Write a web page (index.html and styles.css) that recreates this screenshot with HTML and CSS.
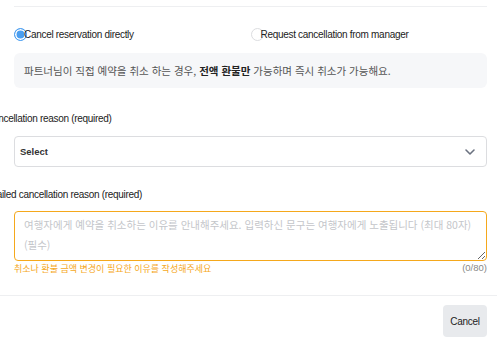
FILE: index.html
```html
<!DOCTYPE html>
<html lang="ko">

<head>
    <meta charset="UTF-8">
    <title>Cancel reservation</title>
    <link rel="stylesheet" href="styles.css">
</head>

<body>
    <div class="cancel-form">
        <div class="cancel-body">
            <div class="radio-row">
                <label class="radio">
                    <span class="radio-dot checked"></span>
                    <span class="radio-text">Cancel reservation directly</span>
                </label>
                <label class="radio">
                    <span class="radio-dot"></span>
                    <span class="radio-text">Request cancellation from manager</span>
                </label>
            </div>
            <div class="notice">
                파트너님이 직접 예약을 취소 하는 경우,&nbsp;<b>전액 환불만</b>&nbsp;가능하며 즉시 취소가 가능해요.
            </div>
            <p class="field-label">Cancellation reason (required)</p>
            <div class="select-box">
                <span>Select</span>
                <svg width="12" height="8" viewBox="0 0 12 8">
                    <path d="M2 2l4 4 4-4" fill="none" stroke="#6b7280" stroke-width="1.6" stroke-linecap="round" stroke-linejoin="round" />
                </svg>
            </div>
            <p class="field-label detail">Detailed cancellation reason (required)</p>
            <textarea class="reason" placeholder="여행자에게 예약을 취소하는 이유를 안내해주세요. 입력하신 문구는 여행자에게 노출됩니다 (최대 80자) (필수)"></textarea>
            <div class="reason-footer">
                <span class="warn">취소나 환불 금액 변경이 필요한 이유를 작성해주세요</span>
                <span class="count">(0/80)</span>
            </div>
        </div>
        <div class="cancel-footer">
            <button class="btn-cancel">Cancel</button>
        </div>
    </div>
</body>

</html>
```

FILE: styles.css
```css
* {
    box-sizing: border-box;
}

body {
    margin: 0;
    background: #fff;
    font-family: "Liberation Sans", "Noto Sans CJK KR", sans-serif;
    color: #222;
}

.cancel-body {
    margin: 6px 10px 0 14px;
    border-top: 1px solid #eeeff1;
}

.radio-row {
    display: flex;
    padding-top: 20px;
    height: 46px;
}

.radio {
    display: flex;
    align-items: center;
    width: 237px;
    height: 14px;
    font-size: 10px;
    letter-spacing: -0.3px;
}

.radio-dot {
    width: 13px;
    height: 13px;
    border-radius: 50%;
    border: 1px solid #dcdde0;
    background: #fff;
    margin-right: -3px;
    flex-shrink: 0;
}

.radio-dot.checked {
    border: 1px solid #4a9ef0;
    background: #4a9ef0;
    box-shadow: inset 0 0 0 1.5px #fff;
}

.notice {
    background: #f6f7f9;
    border-radius: 6px;
    height: 35px;
    padding: 0 10px;
    display: flex;
    align-items: center;
    font-family: "Noto Sans CJK KR", sans-serif;
    font-size: 10.5px;
    color: #555;
}

.notice b {
    color: #222;
    font-weight: 700;
}

.field-label {
    margin: 24px 0 10px -28px;
    font-size: 10px;
    letter-spacing: -0.3px;
    line-height: 14px;
}

.field-label.detail {
    margin: 21px 0 9px -32px;
}

.select-box {
    height: 31px;
    border: 1px solid #dcdde0;
    border-radius: 4px;
    display: flex;
    align-items: center;
    justify-content: space-between;
    padding: 0 10px 0 5px;
    font-size: 9.5px;
    font-weight: 700;
    color: #333;
}

.reason {
    display: block;
    width: 100%;
    height: 50px;
    border: 1px solid #f5a81c;
    border-radius: 4px;
    padding: 3px 9px;
    font-family: "Noto Sans CJK KR", sans-serif;
    font-size: 10.5px;
    line-height: 20px;
    outline: none;
    resize: vertical;
}

.reason::placeholder {
    color: #c4c6ca;
}

.reason-footer {
    display: flex;
    justify-content: space-between;
    margin-top: 1px;
    font-size: 9.5px;
}

.warn {
    color: #f5a81c;
    font-family: "Noto Sans CJK KR", sans-serif;
    font-size: 9px;
}

.count {
    color: #888;
}

.cancel-footer {
    margin-top: 20px;
    border-top: 1px solid #eeeff1;
    padding: 9px 10px 0 0;
    display: flex;
    justify-content: flex-end;
}

.btn-cancel {
    width: 44px;
    height: 32px;
    border: none;
    border-radius: 4px;
    background: #e8eaed;
    font-family: "Liberation Sans", sans-serif;
    font-size: 10px;
    letter-spacing: -0.3px;
    color: #222;
    padding: 0;
}
```
